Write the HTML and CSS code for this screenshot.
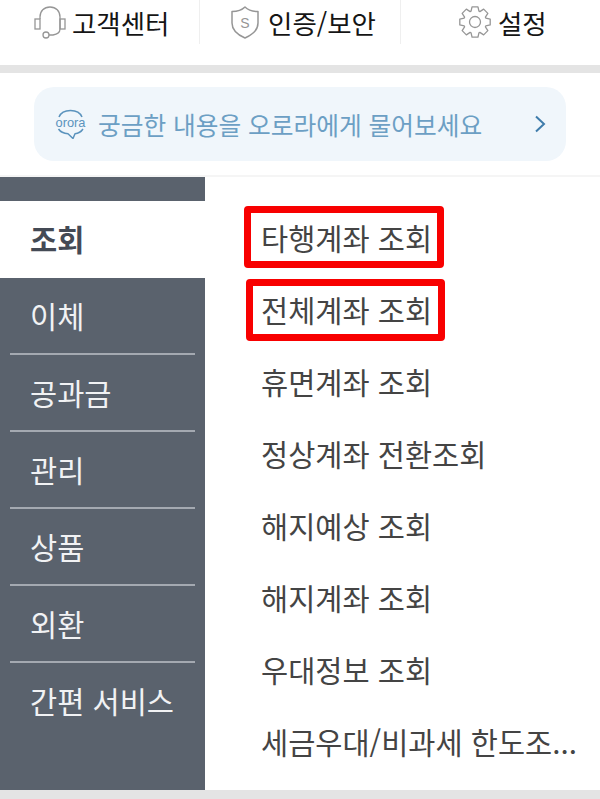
FILE: index.html
```html
<!DOCTYPE html>
<html lang="ko">
<head>
    <meta charset="UTF-8">
    <meta name="viewport" content="width=device-width, initial-scale=1.0">
    <title>전체메뉴</title>
    <link rel="stylesheet" href="styles.css">
</head>
<body>
    <!-- Top shortcuts -->
    <div class="top-bar">
        <div class="top-item">
            <svg class="icon-headset" viewBox="0 0 32 33" fill="none" stroke="#969696" stroke-width="1.3">
                <rect x="1" y="13" width="5" height="10"/>
                <rect x="26" y="13" width="5" height="10"/>
                <path d="M6 13V11C6 5 10 1 16 1S26 5 26 11V23C26 27 23 28 19 29H15"/>
                <circle cx="12" cy="29" r="3"/>
            </svg>
            <span>고객센터</span>
        </div>
        <div class="top-item">
            <svg class="icon-shield" viewBox="0 0 28 33" fill="none" stroke="#969696" stroke-width="1.5">
                <path d="M14 1C11 4 6 5.500 1 5.500V17C1 24 7 29 14 32C21 29 27 24 27 17V5.500C22 5.500 17 4 14 1Z" stroke-linejoin="round"/>
                <text x="14" y="21.500" class="shield-letter">S</text>
            </svg>
            <span>인증/보안</span>
        </div>
        <div class="top-item">
            <svg class="icon-gear" viewBox="-17 -17 34 34" fill="none" stroke="#969696" stroke-width="1.3" stroke-linejoin="round">
                <polygon points="-3.93,-10.8 -2.96,-15.2 2.96,-15.2 3.93,-10.8 4.86,-10.42 8.65,-12.84 12.84,-8.65 10.42,-4.86 10.8,-3.93 15.2,-2.96 15.2,2.96 10.8,3.93 10.42,4.86 12.84,8.65 8.65,12.84 4.86,10.42 3.93,10.8 2.96,15.2 -2.96,15.2 -3.93,10.8 -4.86,10.42 -8.65,12.84 -12.84,8.65 -10.42,4.86 -10.8,3.93 -15.2,2.96 -15.2,-2.96 -10.8,-3.93 -10.42,-4.86 -12.84,-8.65 -8.65,-12.84 -4.86,-10.42"/>
                <circle r="5.5"/>
            </svg>
            <span>설정</span>
        </div>
    </div>

    <!-- Chatbot banner -->
    <div class="banner-wrap">
        <div class="banner">
            <svg class="icon-orora" viewBox="0 0 31 30" fill="none" stroke="#5b93bd" stroke-width="1.5">
                <path d="M4 8C6 3 10 1.500 15.500 1.500C21 1.500 25 3 27 8M28 20C26 23 23 24.500 20 24.700L18 29.500L13 24.800C9 24.500 5.500 23 3.500 20" stroke-linejoin="round"/>
                <text x="15.500" y="18" class="orora-text" textLength="30" lengthAdjust="spacingAndGlyphs">orora</text>
            </svg>
            <span class="banner-text">궁금한 내용을 오로라에게 물어보세요</span>
            <svg class="icon-chevron" viewBox="0 0 12 18" fill="none" stroke="#3f7cab" stroke-width="2">
                <path d="M2 1.500L10 9L2 16.500"/>
            </svg>
        </div>
    </div>

    <!-- Menu -->
    <div class="menu">
        <ul class="side-nav">
            <li class="side-item active">조회</li>
            <li class="side-item">이체</li>
            <li class="side-item">공과금</li>
            <li class="side-item">관리</li>
            <li class="side-item">상품</li>
            <li class="side-item">외환</li>
            <li class="side-item">간편 서비스</li>
        </ul>
        <ul class="sub-list">
            <li class="sub-item">타행계좌 조회</li>
            <li class="sub-item">전체계좌 조회</li>
            <li class="sub-item">휴면계좌 조회</li>
            <li class="sub-item">정상계좌 전환조회</li>
            <li class="sub-item">해지예상 조회</li>
            <li class="sub-item">해지계좌 조회</li>
            <li class="sub-item">우대정보 조회</li>
            <li class="sub-item">세금우대/비과세 한도조...</li>
            <li class="mark mark-first"></li>
            <li class="mark mark-second"></li>
        </ul>
    </div>
    <div class="bottom-band"></div>
</body>
</html>
```

FILE: styles.css
```css
* {
    box-sizing: border-box;
}

html, body {
    margin: 0;
    padding: 0;
}

body {
    width: 600px;
    height: 799px;
    overflow: hidden;
    background-color: white;
    font-family: "Noto Sans CJK KR", "Noto Sans", sans-serif;
}

ul {
    list-style: none;
    margin: 0;
    padding: 0;
}

.top-bar {
    display: flex;
    height: 73px;
    padding-bottom: 21px;
    border-bottom: 8px solid #e4e4e4;
}

.top-item {
    flex: 1;
    display: flex;
    align-items: center;
    justify-content: center;
    gap: 6px;
    padding-left: 4px;
    font-size: 26.500px;
    color: #151515;
    border-right: 1px solid #efefef;
}

.top-item:last-child {
    border-right: none;
}

.icon-headset {
    width: 32px;
    height: 33px;
}

.icon-shield {
    width: 28px;
    height: 33px;
    margin-left: 3px;
    margin-right: 3px;
}

.icon-gear {
    width: 34px;
    height: 34px;
}

.shield-letter {
    font-family: "Liberation Sans", sans-serif;
    font-size: 14px;
    fill: #969696;
    stroke: none;
    text-anchor: middle;
}

.banner-wrap {
    height: 104px;
    padding: 14px 34px 0;
    border-bottom: 2px solid #f5f5f5;
}

.banner {
    display: flex;
    align-items: center;
    height: 74px;
    padding: 0 20px 0 21px;
    background-color: #f0f6fb;
    border-radius: 20px;
}

.icon-orora {
    width: 31px;
    height: 30px;
    margin-right: 12px;
}

.orora-text {
    font-family: "Liberation Sans", sans-serif;
    font-size: 13px;
    fill: #5b93bd;
    stroke: none;
    text-anchor: middle;
}

.banner-text {
    flex: 1;
    font-size: 24.700px;
    color: #6c9fc4;
}

.icon-chevron {
    width: 12px;
    height: 18px;
}

.menu {
    display: flex;
    height: 613px;
}

.side-nav {
    width: 205px;
    padding-top: 24px;
    background-color: #5a626d;
}

.side-item {
    display: flex;
    align-items: center;
    height: 77px;
    padding: 0 0 3px 30px;
    font-size: 29.500px;
    color: #f1f2f4;
    position: relative;
}

.side-item::after {
    content: "";
    position: absolute;
    left: 10px;
    right: 10px;
    bottom: 0;
    height: 2px;
    background-color: #a4a9b1;
}

.side-item.active {
    background-color: white;
    color: #444a55;
    font-weight: bold;
}

.side-item.active::after,
.side-item:last-child::after {
    display: none;
}

.sub-list {
    flex: 1;
    min-width: 0;
    position: relative;
    padding: 24px 0 0 56px;
}

.sub-item {
    height: 72px;
    line-height: 72px;
    font-size: 29.500px;
    color: #444444;
    white-space: nowrap;
}

/* red annotation boxes over the first two rows */
.mark {
    position: absolute;
    height: 62px;
    border: 7px solid #f80000;
    border-radius: 4px;
}

.mark-first {
    top: 29px;
    left: 39px;
    width: 200px;
}

.mark-second {
    top: 102px;
    left: 41px;
    width: 199px;
}

.bottom-band {
    height: 9px;
    background-color: #e4e4e4;
}
```
